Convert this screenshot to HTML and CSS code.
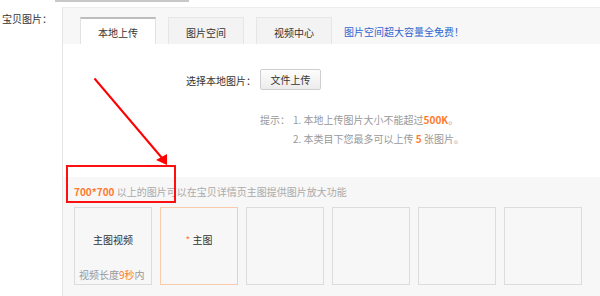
FILE: index.html
```html
<!DOCTYPE html>
<html lang="zh-CN">
<head>
<meta charset="utf-8">
<title>宝贝图片</title>
<link rel="stylesheet" href="styles.css">
</head>
<body>
<div class="page">
  <div class="top-bar"></div>
  <div class="row">
    <div class="field-label">宝贝图片：</div>
    <div class="panel">
      <div class="tabs">
        <div class="tab active">本地上传</div>
        <div class="tab">图片空间</div>
        <div class="tab">视频中心</div>
        <a class="promo">图片空间超大容量全免费！</a>
      </div>
      <div class="panel-body">
        <div class="upload-row">
          <span class="upload-label">选择本地图片：</span>
          <button class="upload-btn">文件上传</button>
        </div>
        <div class="tips">
          <div class="tip-line"><span class="tip-title">提示：</span><span>1. 本地上传图片大小不能超过<b class="hl">500K</b>。</span></div>
          <div class="tip-line indent"><span>2. 本类目下您最多可以上传 <b class="hl">5</b> 张图片。</span></div>
        </div>
      </div>
      <div class="gallery">
        <div class="gallery-note"><b class="hl">700*700</b> 以上的图片可以在宝贝详情页主图提供图片放大功能</div>
        <div class="slots">
          <div class="slot">
            <span class="slot-title">主图视频</span>
            <span class="slot-sub">视频长度<b class="hl-n">9秒</b>内</span>
          </div>
          <div class="slot main"><span class="slot-title"><i class="star">*</i> 主图</span></div>
          <div class="slot"></div>
          <div class="slot"></div>
          <div class="slot"></div>
          <div class="slot"></div>
        </div>
      </div>
    </div>
  </div>
  <div class="red-box"></div>
  <svg class="arrow" width="600" height="296" viewBox="0 0 600 296">
    <line x1="94.5" y1="78.5" x2="162" y2="158" stroke="#ff0000" stroke-width="2"/>
    <polygon points="167,165 156,160 167,154" fill="#ff0000"/>
  </svg>
</div>
</body>
</html>
```

FILE: styles.css
```css
* { box-sizing: border-box; }
html, body { margin: 0; padding: 0; background: #fff; }
body {
  font-family: "Noto Sans CJK SC", "Microsoft YaHei", sans-serif;
  font-size: 10px;
  color: #333;
}
.page { position: relative; width: 600px; height: 296px; overflow: hidden; }
.top-bar { margin-left: 55px; width: 134px; height: 2px; background: #c8c8c8; }
.row { display: flex; margin-top: 5px; }
.field-label { width: 62px; flex: none; padding: 4px 0 0 2px; line-height: 16px; color: #333; white-space: nowrap; }
.panel {
  flex: none;
  width: 560px;
  border-top: 1px solid #ececec;
  border-left: 1px solid #e4e4e4;
}
.tabs {
  display: flex;
  align-items: flex-end;
  gap: 12px;
  height: 36px;
  padding-left: 17px;
  background: #f7f7f7;
}
.tab {
  width: 76px;
  height: 27px;
  padding-top: 2px;
  line-height: 25px;
  text-align: center;
  color: #333;
  background: #f3f3f3;
  border: 1px solid #e6e6e6;
  border-bottom: none;
  white-space: nowrap;
}
.tab.active { background: #fff; border-top: 2px solid #bdbdbd; border-left-color: #e2e2e2; border-right-color: #e2e2e2; padding-top: 1px; }
.promo { color: #2f66cf; line-height: 25px; height: 27px; padding-top: 2px; white-space: nowrap; }
.panel-body { height: 133px; background: #fff; padding-top: 25px; }
.upload-row { display: flex; align-items: center; padding-left: 123px; height: 21px; }
.upload-label { color: #333; margin-right: 4px; white-space: nowrap; padding-top: 1px; }
.upload-btn {
  width: 61px; height: 21px; padding: 0;
  font: inherit; font-size: 10px; color: #333;
  background: linear-gradient(#fdfdfd, #ececec);
  border: 1px solid #cfcfcf; border-radius: 2px;
}
.tips { padding-top: 20px; padding-left: 197px; color: #999; }
.tip-line { line-height: 20px; height: 19px; display: flex; white-space: nowrap; }
.tip-title { width: 33px; }
.tip-line.indent { padding-left: 33px; }
.hl { color: #ff7a2f; font-weight: bold; }
.hl-n { color: #ff7a2f; font-weight: normal; }
.gallery { background: #f7f7f7; padding: 6px 0 20px 11px; height: 130px; }
.gallery-note { color: #aaa; line-height: 16px; height: 24px; padding-top: 1px; white-space: nowrap; }
.slots { display: flex; gap: 8px; }
.slot {
  position: relative;
  width: 78px; height: 78px;
  border: 1px solid #dcdcdc;
  display: flex; align-items: center; justify-content: center;
  background: #f7f7f7;
}
.slot.main { border-color: #f7cbab; }
.slot-title { color: #333; margin-top: -13px; white-space: nowrap; }
.star { font-style: normal; color: #ff7a2f; }
.slot-sub { position: absolute; left: 4px; bottom: 2px; color: #999; line-height: 14px; white-space: nowrap; }
.red-box {
  position: absolute; left: 66px; top: 165px; width: 110px; height: 38px;
  border: 2px solid #ff1010;
}
.arrow { position: absolute; left: 0; top: 0; }
```
